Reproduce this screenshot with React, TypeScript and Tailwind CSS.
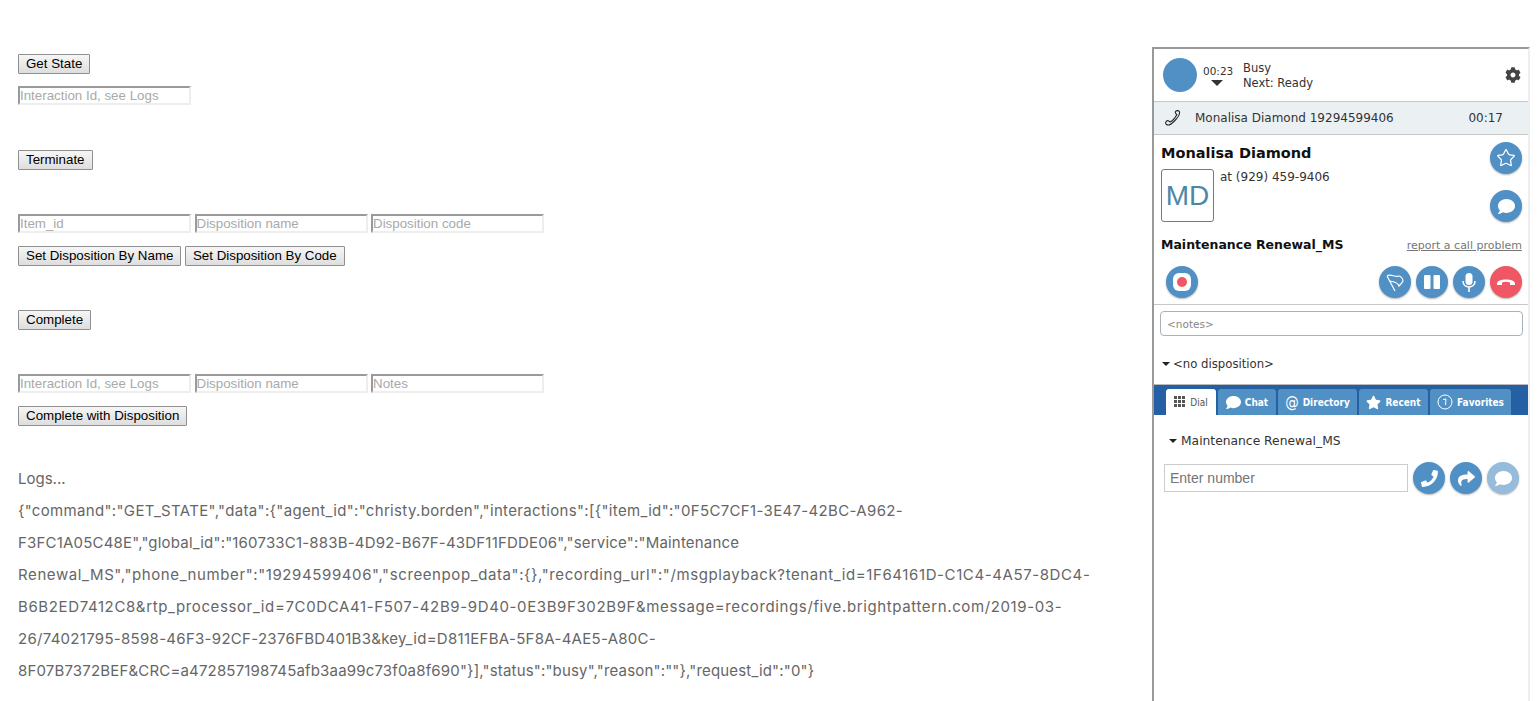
import React from 'react';
import { Star } from 'lucide-react';
import { FaCog, FaComment, FaPhone, FaShare, FaStar } from 'react-icons/fa';

const LOG_LINES = [
  { text: '{"command":"GET_STATE","data":{"agent_id":"christy.borden","interactions":[{"item_id":"0F5C7CF1-3E47-42BC-A962-', track: 'tracking-[0.34px]' },
  { text: 'F3FC1A05C48E","global_id":"160733C1-883B-4D92-B67F-43DF11FDDE06","service":"Maintenance', track: 'tracking-[0.19px]' },
  { text: 'Renewal_MS","phone_number":"19294599406","screenpop_data":{},"recording_url":"/msgplayback?tenant_id=1F64161D-C1C4-4A57-8DC4-', track: 'tracking-[0.6px]' },
  { text: 'B6B2ED7412C8&rtp_processor_id=7C0DCA41-F507-42B9-9D40-0E3B9F302B9F&message=recordings/five.brightpattern.com/2019-03-', track: 'tracking-[0.62px]' },
  { text: '26/74021795-8598-46F3-92CF-2376FBD401B3&key_id=D811EFBA-5F8A-4AE5-A80C-', track: 'tracking-[0.29px]' },
  { text: '8F07B7372BEF&CRC=a472857198745afb3aa99c73f0a8f690"}],"status":"busy","reason":""},"request_id":"0"}', track: 'tracking-[0.17px]' },
];

const Btn = ({ children }: { children: React.ReactNode }) => (
  <button className="block h-5 px-[7px] border border-[#8f8f8f] rounded-[1px] bg-gradient-to-b from-[#f6f6f6] to-[#dedede] text-[13.33px] leading-none text-black font-['Liberation_Sans',sans-serif] whitespace-nowrap">
    {children}
  </button>
);

const Field = ({ placeholder }: { placeholder: string }) => (
  <input
    placeholder={placeholder}
    className="block w-[173px] h-[19px] border-2 border-t-[#9a9a9a] border-l-[#9a9a9a] border-r-[#eeeeee] border-b-[#eeeeee] px-0 text-[13.33px] font-['Liberation_Sans',sans-serif] placeholder:text-[#a9a9a9] bg-white"
  />
);

const Round = ({ children, color = 'bg-[#5190c4]' }: { children: React.ReactNode; color?: string }) => (
  <div className={`w-8 h-8 rounded-full ${color} shadow-[0_1px_2px_rgba(0,0,0,0.3)] flex items-center justify-center shrink-0`}>
    {children}
  </div>
);

const Tab = ({ icon, label, active, width }: { icon: React.ReactNode; label: string; active?: boolean; width: string }) => (
  <div
    className={`h-[26px] ${width} rounded-t-[3px] flex items-center justify-center gap-[4px] text-[10px] font-['DejaVu_Sans_Condensed','DejaVu_Sans',sans-serif] ${
      active ? 'bg-white text-[#555]' : 'bg-[#5190c4] text-white font-bold'
    }`}
  >
    {icon}
    {label}
  </div>
);

export default function App() {
  return (
    <div className="w-[1540px] h-[701px] overflow-hidden bg-white flex">
      <div className="w-[1152px] shrink-0 pl-[18px] pt-[54px]">
        <Btn>Get State</Btn>
        <div className="mt-[12px] flex"><Field placeholder="Interaction Id, see Logs" /></div>
        <div className="mt-[45px]"><Btn>Terminate</Btn></div>
        <div className="mt-[44px] flex gap-[3.5px]">
          <Field placeholder="Item_id" />
          <Field placeholder="Disposition name" />
          <Field placeholder="Disposition code" />
        </div>
        <div className="mt-[13px] flex gap-[3.5px]">
          <Btn>Set Disposition By Name</Btn>
          <Btn>Set Disposition By Code</Btn>
        </div>
        <div className="mt-[44px]"><Btn>Complete</Btn></div>
        <div className="mt-[44px] flex gap-[3.5px]">
          <Field placeholder="Interaction Id, see Logs" />
          <Field placeholder="Disposition name" />
          <Field placeholder="Notes" />
        </div>
        <div className="mt-[13px]"><Btn>Complete with Disposition</Btn></div>
        <div className="mt-[37px] text-[15px] leading-[32px] text-[#666] font-['Inter',sans-serif] whitespace-nowrap">
          <div>Logs...</div>
          {LOG_LINES.map((l) => (
            <div key={l.text} className={l.track}>{l.text}</div>
          ))}
        </div>
      </div>

      <div className="mt-[47px] w-[378px] h-[654px] border-t-2 border-l-2 border-[#999] border-r-2 border-r-[#eeeeee] font-['DejaVu_Sans',sans-serif] text-[12px] text-[#333] shrink-0">
        <div className="h-[53px] flex items-center pl-[9px] pr-[7px] border-b border-[#c8c8c8]">
          <div className="w-[34px] h-[34px] rounded-full bg-[#5190c4]" />
          <div className="ml-[6px] w-[40px] flex flex-col items-start -mt-[1px]">
            <span className="text-[10.5px] leading-[14px]">00:23</span>
            <span className="ml-[8px] mt-[2px] w-0 h-0 border-x-[6px] border-x-transparent border-t-[6px] border-t-[#333]" />
          </div>
          <div className="text-[11.5px] leading-[15px] flex-1 pt-[2px]">
            <div>Busy</div>
            <div>Next: Ready</div>
          </div>
          <FaCog size={16} className="text-[#444]" />
        </div>

        <div className="h-[33px] flex items-center bg-[#ebf1f3] border-b border-[#c8c8c8] pl-[10px] pr-[25px] text-[12px]">
          <svg width="18" height="18" viewBox="0 0 18 18" fill="none" stroke="#222" strokeWidth="1.1">
            <path d="M11.5 2.5 C12.5 1.2 15 1.4 15.5 3 C15.8 5 13.5 9 10.5 12 C7.5 15 4 16.8 2.5 15.5 C1.2 14.5 1.5 12.6 3 11.8 C4.2 11.2 5.3 12.2 6 13 C8 12 11.5 8.5 12.8 5.5 C12 5 10.8 3.6 11.5 2.5 Z" />
          </svg>
          <span className="ml-[13px] flex-1">Monalisa Diamond 19294599406</span>
          <span>00:17</span>
        </div>

        <div className="flex h-[170px] border-b border-[#c8c8c8] pl-[7px] pr-[6px]">
          <div className="flex-1">
            <div className="flex justify-between">
              <div>
                <div className="pt-[8px] text-[14.5px] leading-[20px] font-bold text-[#111]">Monalisa Diamond</div>
                <div className="mt-[6px] flex">
                  <div className="w-[53px] h-[53px] border border-[#4d87a6] rounded-[3px] flex items-center justify-center text-[28px] text-[#4d87a6] font-['Liberation_Sans',sans-serif]">
                    MD
                  </div>
                  <span className="ml-[6px] text-[12px] leading-[16px]">at (929) 459-9406</span>
                </div>
              </div>
              <div className="pt-[7px] flex flex-col gap-[16px]">
                <Round>
                  <Star size={20} strokeWidth={1.5} className="text-white" />
                </Round>
                <Round>
                  <FaComment size={17} className="text-white" />
                </Round>
              </div>
            </div>
            <div className="mt-[14px] flex items-baseline justify-between">
              <span className="font-bold text-[12.5px] text-[#111]">Maintenance Renewal_MS</span>
              <a className="text-[11px] text-[#777] underline">report a call problem</a>
            </div>
            <div className="mt-[11px] pl-[5px] flex items-center gap-[5px]">
              <Round>
                <div className="w-[18px] h-[18px] rounded-[6px] bg-white flex items-center justify-center">
                  <div className="w-[10px] h-[10px] rounded-full bg-[#ee5763]" />
                </div>
              </Round>
              <div className="flex-1" />
              <Round>
                <svg width="22" height="22" viewBox="0 0 22 22" fill="none" stroke="#fff" strokeWidth="1.2">
                  <path d="M3 5 L11 20 M3 5 C7 2 11 7 15 5 C17 5 19 8 19 10 C18 12 17 13 15 15 C14 11 10 11 6 10" />
                </svg>
              </Round>
              <Round>
                <svg width="18" height="16" viewBox="0 0 18 16" fill="#fff">
                  <rect x="1" y="1" width="6.5" height="14" rx="1" />
                  <rect x="10.5" y="1" width="6.5" height="14" rx="1" />
                </svg>
              </Round>
              <Round>
                <svg width="18" height="20" viewBox="0 0 18 20" fill="none" stroke="#fff" strokeWidth="1.6">
                  <rect x="5.5" y="1" width="7" height="12" rx="3.5" fill="#fff" stroke="none" />
                  <path d="M3 9 C3 17 15 17 15 9 M9 15 L9 20" />
                </svg>
              </Round>
              <Round color="bg-[#ee5763]">
                <svg width="20" height="20" viewBox="0 0 20 20" fill="#fff">
                  <path d="M1 11.5 C1 6 19 6 19 11.5 L19 13 L14 13 L14 10.5 C12 9.6 8 9.6 6 10.5 L6 13 L1 13 Z" />
                </svg>
              </Round>
            </div>
          </div>
        </div>

        <div className="px-[6px] pt-[6px]">
          <input
            placeholder="<notes>"
            className="block w-[363px] h-[25px] border border-[#a9b2b8] rounded-[4px] px-[6px] text-[10.5px] placeholder:text-[#888]"
          />
        </div>
        <div className="mt-[20px] pl-[8px] flex items-center gap-[3px] text-[11.7px] leading-[16px]">
          <span className="w-0 h-0 border-x-[4px] border-x-transparent border-t-[4px] border-t-[#222]" />
          {'<no disposition>'}
        </div>

        <div className="mt-[12px] h-[31px] bg-[#2560a4] pl-[12px] flex items-end gap-[2px] border-t border-[#bbb]">
          <Tab active width="w-[50px]" label="Dial" icon={<svg width="12" height="12" viewBox="0 0 12 12" fill="#555"><path d="M0 0h3v3H0zM4 0h3v3H4zM8 0h3v3H8zM0 4h3v3H0zM4 4h3v3H4zM8 4h3v3H8zM0 8h3v3H0zM4 8h3v3H4zM8 8h3v3H8z" /></svg>} />
          <Tab width="w-[58px]" label="Chat" icon={<FaComment size={15} />} />
          <Tab width="w-[79px]" label="Directory" icon={<span className="text-[15px] font-normal leading-none">@</span>} />
          <Tab width="w-[69px]" label="Recent" icon={<FaStar size={15} />} />
          <Tab width="w-[81px]" label="Favorites" icon={<svg width="16" height="16" viewBox="0 0 16 16" fill="none" stroke="#fff"><circle cx="8" cy="8" r="7" /><path d="M6 5.5 L9 5 L8.5 11" /></svg>} />
        </div>

        <div className="mt-[18px] pl-[15px] flex items-center gap-[4px] text-[12.3px] leading-[16px]">
          <span className="w-0 h-0 border-x-[4px] border-x-transparent border-t-[4px] border-t-[#222]" />
          Maintenance Renewal_MS
        </div>
        <div className="mt-[13px] pl-[10px] flex items-center gap-[5px]">
          <input
            placeholder="Enter number"
            className="block w-[244px] h-[28px] border border-[#ccc] px-[5px] text-[14px] font-['Liberation_Sans',sans-serif] placeholder:text-[#757575]"
          />
          <Round>
            <FaPhone size={17} className="text-white" />
          </Round>
          <Round>
            <FaShare size={17} className="text-white" />
          </Round>
          <Round color="bg-[#97bbdb]">
            <FaComment size={17} className="text-white" />
          </Round>
        </div>
      </div>
    </div>
  );
}
